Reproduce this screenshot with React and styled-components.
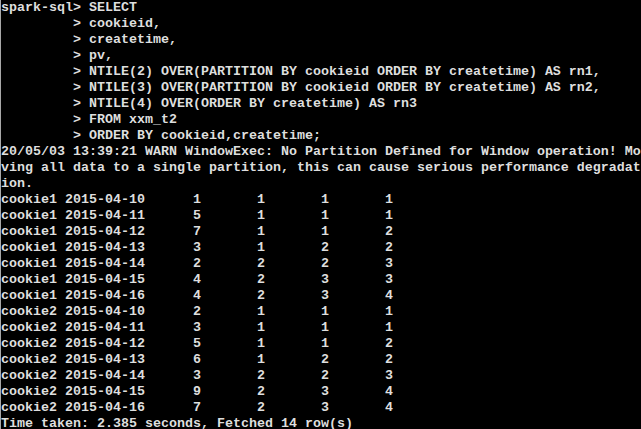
import React from "react";
import styled, { createGlobalStyle } from "styled-components";

const GlobalStyle = createGlobalStyle`
  html, body {
    margin: 0;
    padding: 0;
    background: #000;
  }
`;

const Console = styled.div`
  width: 640px;
  height: 429px;
  overflow: hidden;
  background: #000;
  border-left: 1px solid #a8a8a8;
  padding-top: 0;
`;

const Line = styled.div`
  height: 16px;
  line-height: 16px;
  white-space: pre;
  tab-size: 8;
  font-family: "Liberation Mono", "DejaVu Sans Mono", monospace;
  font-size: 13.333px;
  font-weight: bold;
  color: #dedede;
`;

const lines = [
  "spark-sql> SELECT",
  "         > cookieid,",
  "         > createtime,",
  "         > pv,",
  "         > NTILE(2) OVER(PARTITION BY cookieid ORDER BY createtime) AS rn1,",
  "         > NTILE(3) OVER(PARTITION BY cookieid ORDER BY createtime) AS rn2,",
  "         > NTILE(4) OVER(ORDER BY createtime) AS rn3",
  "         > FROM xxm_t2",
  "         > ORDER BY cookieid,createtime;",
  "20/05/03 13:39:21 WARN WindowExec: No Partition Defined for Window operation! Mo",
  "ving all data to a single partition, this can cause serious performance degradat",
  "ion.",
];

const rows = [
  ["cookie1", "2015-04-10", 1, 1, 1, 1],
  ["cookie1", "2015-04-11", 5, 1, 1, 1],
  ["cookie1", "2015-04-12", 7, 1, 1, 2],
  ["cookie1", "2015-04-13", 3, 1, 2, 2],
  ["cookie1", "2015-04-14", 2, 2, 2, 3],
  ["cookie1", "2015-04-15", 4, 2, 3, 3],
  ["cookie1", "2015-04-16", 4, 2, 3, 4],
  ["cookie2", "2015-04-10", 2, 1, 1, 1],
  ["cookie2", "2015-04-11", 3, 1, 1, 1],
  ["cookie2", "2015-04-12", 5, 1, 1, 2],
  ["cookie2", "2015-04-13", 6, 1, 2, 2],
  ["cookie2", "2015-04-14", 3, 2, 2, 3],
  ["cookie2", "2015-04-15", 9, 2, 3, 4],
  ["cookie2", "2015-04-16", 7, 2, 3, 4],
];

export default function App() {
  return (
    <>
      <GlobalStyle />
      <Console>
        {lines.map((text, i) => (
          <Line key={i}>{text}</Line>
        ))}
        {rows.map(([id, date, pv, a, b, c], i) => (
          <Line key={"r" + i}>{`${id} ${date}\t${pv}\t${a}\t${b}\t${c}`}</Line>
        ))}
        <Line>Time taken: 2.385 seconds, Fetched 14 row(s)</Line>
      </Console>
    </>
  );
}
